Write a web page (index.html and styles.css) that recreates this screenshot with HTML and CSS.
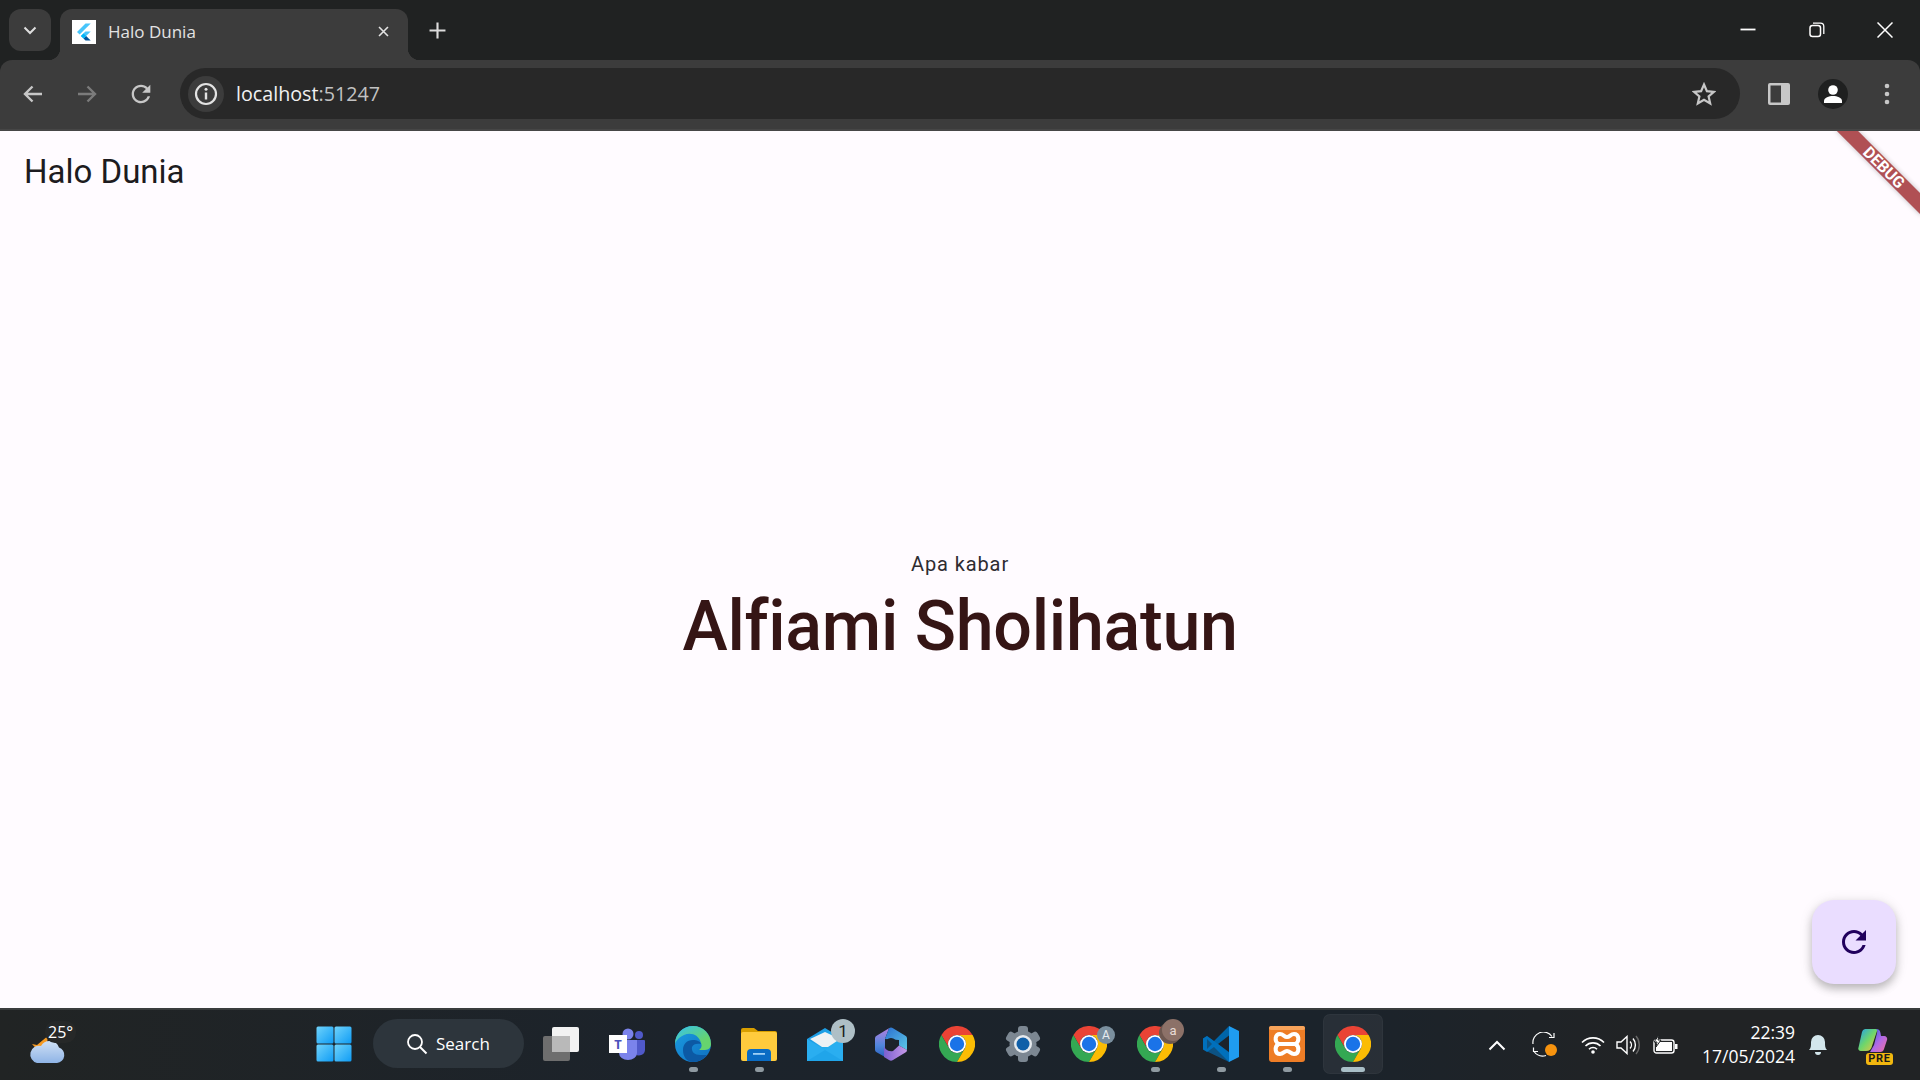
FILE: index.html
```html
<!DOCTYPE html>
<html lang="id">
<head>
<meta charset="utf-8">
<title>Halo Dunia</title>
<link rel="stylesheet" href="styles.css">
</head>
<body>
<svg class="defs" width="0" height="0" aria-hidden="true">
  <defs>
    <symbol id="chrome" viewBox="0 0 36 36">
      <path fill="#ea4335" d="M2.4 9A18 18 0 0 1 33.6 9H18A9 9 0 0 0 10.2 22.5Z"/>
      <path fill="#34a853" d="M2.4 9L10.2 22.5A9 9 0 0 0 25.8 22.5L18 36A18 18 0 0 1 2.4 9Z"/>
      <path fill="#fbbc04" d="M33.6 9H18A9 9 0 0 1 25.8 22.5L18 36A18 18 0 0 0 33.6 9Z"/>
      <circle cx="18" cy="18" r="9" fill="#fff"/>
      <circle cx="18" cy="18" r="7.2" fill="#1a73e8"/>
    </symbol>
    <linearGradient id="edgeA" x1="0" y1="0" x2="1" y2="1"><stop offset="0" stop-color="#1b9de2"/><stop offset="1" stop-color="#0f6fc0"/></linearGradient>
    <linearGradient id="edgeB" x1="0" y1="0" x2="1" y2="1"><stop offset="0" stop-color="#35c1f1"/><stop offset=".7" stop-color="#66d36e"/></linearGradient>
    <linearGradient id="startG" x1="0" y1="0" x2="1" y2="1"><stop offset="0" stop-color="#6fd3fb"/><stop offset="1" stop-color="#0f9cf5"/></linearGradient>
    <linearGradient id="cloudG" x1="0" y1="0" x2="0" y2="1"><stop offset="0" stop-color="#cfe0f5"/><stop offset="1" stop-color="#8fb4e6"/></linearGradient>
    <linearGradient id="mailG" x1="0" y1="0" x2="1" y2="1"><stop offset="0" stop-color="#1490df"/><stop offset="1" stop-color="#36c5f5"/></linearGradient>
    <linearGradient id="hexL" x1="0" y1="0" x2="0" y2="1"><stop offset="0" stop-color="#b27fe0"/><stop offset=".6" stop-color="#4f86dc"/><stop offset="1" stop-color="#2a62c0"/></linearGradient>
    <linearGradient id="hexT" x1="0" y1="0" x2="1" y2="1"><stop offset="0" stop-color="#2b6fd0"/><stop offset="1" stop-color="#5cc8e8"/></linearGradient>
    <linearGradient id="hexB" x1="0" y1="0" x2="1" y2="0"><stop offset="0" stop-color="#7a5fd0"/><stop offset="1" stop-color="#c79ae8"/></linearGradient>
    <linearGradient id="copG" x1="0" y1="0" x2="1" y2="1"><stop offset="0" stop-color="#1f9ff0"/><stop offset=".5" stop-color="#6fd66a"/><stop offset="1" stop-color="#f5c23f"/></linearGradient>
    <linearGradient id="copH" x1="0" y1="0" x2="1" y2="1"><stop offset="0" stop-color="#2b63e0"/><stop offset=".55" stop-color="#b36ae6"/><stop offset="1" stop-color="#f2709b"/></linearGradient>
  </defs>
</svg>

<header class="tabstrip">
  <button class="tab-search">
    <svg class="ic16" viewBox="0 0 16 16"><path d="M2.5 5.5L8 11l5.5-5.5" fill="none" stroke="#dedede" stroke-width="2"/></svg>
  </button>
  <div class="tab">
    <span class="favicon">
      <svg viewBox="0 0 24 24" width="24" height="24"><path fill="#47c5fb" d="M13.5 3.5L5 12l2.6 2.6L18.7 3.5Z"/><path fill="#47c5fb" d="M13.4 11.4L8.9 16l2.6 2.6 7.2-7.2Z"/><path fill="#00569e" d="M11.5 18.6l2 2h5.2l-4.6-4.6Z"/><path fill="#00b5f8" d="M8.9 16l2.6-2.6 2.6 2.6-2.6 2.6Z"/></svg>
    </span>
    <span class="tab-title">Halo Dunia</span>
    <svg class="tab-close" viewBox="0 0 16 16"><path d="M2.5 2.5l11 11M13.5 2.5l-11 11" stroke="#e3e3e3" stroke-width="2"/></svg>
  </div>
  <svg class="new-tab" viewBox="0 0 16 16"><path d="M8 0.5v15M0.5 8h15" stroke="#dcdcdc" stroke-width="2"/></svg>
  <div class="win-controls">
    <svg class="win-btn" viewBox="0 0 16 16"><path d="M0.5 7.5h15" stroke="#fff" stroke-width="1.8"/></svg>
    <svg class="win-btn" viewBox="0 0 16 16"><rect x="1" y="3.5" width="10.5" height="11" rx="2.5" fill="none" stroke="#fff" stroke-width="1.5"/><path d="M4 1.2h7.5A3.3 3.3 0 0 1 14.8 4.5v7.5" fill="none" stroke="#fff" stroke-width="1.3"/></svg>
    <svg class="win-btn" viewBox="0 0 16 16"><path d="M0.5 0.5l15 15M15.5 0.5l-15 15" stroke="#fff" stroke-width="1.5"/></svg>
  </div>
</header>

<nav class="toolbar">
  <svg class="tool" viewBox="0 0 24 24"><path d="M21 12H4M11.5 4.5L4 12l7.5 7.5" fill="none" stroke="#c7c7c7" stroke-width="2.4"/></svg>
  <svg class="tool tool-fwd" viewBox="0 0 24 24"><path d="M3 12h17M12.5 4.5L20 12l-7.5 7.5" fill="none" stroke="#7b7b7b" stroke-width="2.4"/></svg>
  <svg class="tool-reload" viewBox="0 0 24 24"><path fill="#c7c7c7" d="M17.65 6.35C16.2 4.9 14.21 4 12 4c-4.42 0-7.99 3.58-7.99 8s3.57 8 7.99 8c3.73 0 6.84-2.55 7.73-6h-2.08c-.82 2.33-3.04 4-5.65 4-3.31 0-6-2.69-6-6s2.69-6 6-6c1.66 0 3.14.69 4.22 1.78L13 11h7V4l-2.35 2.35z"/></svg>
  <div class="omnibox">
    <span class="site-info">
      <svg viewBox="0 0 24 24" width="24" height="24"><circle cx="12" cy="12" r="10" fill="none" stroke="#e3e3e3" stroke-width="2.2"/><path d="M12 10.5v7" stroke="#e3e3e3" stroke-width="2.4"/><circle cx="12" cy="7.3" r="1.5" fill="#e3e3e3"/></svg>
    </span>
    <span class="url">localhost<span class="url-port">:51247</span></span>
    <svg class="star" viewBox="0 0 24 24"><path d="M12 2.5l2.9 6.6 7.1.7-5.4 4.7 1.6 7-6.2-3.7-6.2 3.7 1.6-7L2 9.8l7.1-.7Z" fill="none" stroke="#c7c7c7" stroke-width="2.2"/></svg>
  </div>
  <svg class="panel-ic" viewBox="0 0 22 22"><rect width="22" height="22" rx="2" fill="#c7c7c7"/><rect x="2.5" y="2.5" width="10.5" height="17" fill="#3c3c3c"/></svg>
  <span class="avatar">
    <svg viewBox="0 0 30 30" width="30" height="30"><circle cx="15" cy="15" r="15" fill="#1f2020"/><circle cx="15" cy="11" r="4.8" fill="#fff"/><path d="M6 24v-2c0-3.5 5-5 9-5s9 1.5 9 5v2Z" fill="#fff"/></svg>
  </span>
  <svg class="menu-ic" viewBox="0 0 6 22"><circle cx="3" cy="3" r="2.3" fill="#c7c7c7"/><circle cx="3" cy="11" r="2.3" fill="#c7c7c7"/><circle cx="3" cy="19" r="2.3" fill="#c7c7c7"/></svg>
</nav>

<main class="page">
  <div class="appbar">Halo Dunia</div>
  <section class="hero">
    <p class="hero-small">Apa kabar</p>
    <h1 class="hero-name">Alfiami Sholihatun</h1>
  </section>
  <div class="debug-banner">DEBUG</div>
  <button class="fab">
    <svg viewBox="0 0 24 24" width="36" height="36"><path fill="#21005d" d="M17.65 6.35C16.2 4.9 14.21 4 12 4c-4.42 0-7.99 3.58-7.99 8s3.57 8 7.99 8c3.73 0 6.84-2.55 7.73-6h-2.08c-.82 2.33-3.04 4-5.65 4-3.31 0-6-2.69-6-6s2.69-6 6-6c1.66 0 3.14.69 4.22 1.78L13 11h7V4l-2.35 2.35z"/></svg>
  </button>
</main>

<footer class="taskbar">
  <div class="weather">
    <svg viewBox="0 0 38 38" width="38" height="38"><path d="M9 18l-5-1c3 4 6 5 9 5l6-7 2-7Z" fill="#f59a23"/><path d="M9 36h20a8 8 0 0 0 2-15.5A10 10 0 0 0 13 19a8.5 8.5 0 0 0-4 17Z" fill="url(#cloudG)"/></svg>
    <span class="temp">25°</span>
  </div>
  <div class="apps">
    <div class="app">
      <svg viewBox="0 0 36 36" width="36" height="36"><rect width="17" height="17" x="0.5" y="0.5" rx="1.5" fill="url(#startG)"/><rect width="17" height="17" x="18.5" y="0.5" rx="1.5" fill="url(#startG)"/><rect width="17" height="17" x="0.5" y="18.5" rx="1.5" fill="url(#startG)"/><rect width="17" height="17" x="18.5" y="18.5" rx="1.5" fill="url(#startG)"/></svg>
    </div>
    <div class="search">
      <svg viewBox="0 0 22 22" width="22" height="22"><circle cx="9" cy="9" r="7" fill="none" stroke="#fff" stroke-width="1.8"/><path d="M14 14l6.5 6.5" stroke="#fff" stroke-width="2"/></svg>
      <span>Search</span>
    </div>
    <div class="app">
      <svg viewBox="0 0 36 34" width="36" height="34"><rect x="0" y="9" width="27" height="25" rx="2" fill="#6e6e6e"/><rect x="9" y="0" width="27" height="25" rx="2" fill="#f2f2f2"/><path d="M9 9h18v16H9Z" fill="#b9b9b9"/></svg>
    </div>
    <div class="app">
      <svg viewBox="0 0 36 32" width="36" height="32"><circle cx="19" cy="6" r="5.5" fill="#7b83eb"/><circle cx="30" cy="7" r="4" fill="#5059c9"/><path d="M25 12h10a1 1 0 0 1 1 1v9a6 6 0 0 1-10 4Z" fill="#5059c9"/><path d="M10 12h18v13a9 7 0 0 1-18 0Z" fill="#7b83eb"/><rect x="0" y="7" width="18" height="18" fill="#fff"/><text class="teams-t" x="9" y="21" text-anchor="middle">T</text></svg>
    </div>
    <div class="app">
      <svg viewBox="0 0 36 36" width="36" height="36"><circle cx="18" cy="18" r="18" fill="url(#edgeA)"/><path d="M18 0C28 0 36 8 36 18c0 3-2 6-6 6h-6c3-2 3-5 2-7C24 9 16 6 9 9 2 12 1 16 0 18 0 8 8 0 18 0Z" fill="url(#edgeB)"/><path d="M32 29c-3 4-8 7-14 7-6 0-10-5-10-12 0-6 4-10 10-10 4 0 7 1 8 4-4-1-8 0-9 3-1 5 3 8 8 8 3 0 5 0 7 0Z" fill="#0c59a4"/></svg>
      <i class="dot"></i>
    </div>
    <div class="app">
      <svg viewBox="0 0 36 33" width="36" height="33"><path d="M0 2a2 2 0 0 1 2-2h11l4 3h17a2 2 0 0 1 2 2v5H0Z" fill="#d99f00"/><rect y="4" width="36" height="29" rx="2" fill="#ffcb3d"/><path d="M6 33V25a4 4 0 0 1 4-4h16a4 4 0 0 1 4 4v8Z" fill="#0a6cc4"/><rect x="12" y="25" width="12" height="1.8" fill="#9fd0f5"/></svg>
      <i class="dot"></i>
    </div>
    <div class="app">
      <svg viewBox="0 0 36 34" width="36" height="34"><path d="M0 12L18 1l18 11v22H0Z" fill="url(#mailG)"/><path d="M3 12L18 5l15 7-12 8h-6Z" fill="#eef2f4"/><path d="M0 12l18 11 18-11v22H0Z" fill="#2aaef0"/><path d="M36 34H0l18-11 18 11Z" fill="#1b9fe6" opacity=".6"/></svg>
      <span class="badge badge-mail">1</span>
    </div>
    <div class="app">
      <svg viewBox="0 0 32 34" width="32" height="34"><path d="M14 1.2L2 8.5A3 3 0 0 0 0 11v12a3 3 0 0 0 2 2.6l8 4.5V12Z" fill="url(#hexL)"/><path d="M14 1.2a4 4 0 0 1 4 0l12 7.3A3 3 0 0 1 32 11v12l-8-4.5V13L10 12Z" fill="url(#hexT)"/><path d="M9 17c0 5 4 8 9 7l6-5.5 8 4.5a3 3 0 0 1-2 2.8l-12 7.3a4 4 0 0 1-4 0l-5-3.1Z" fill="url(#hexB)"/><circle cx="16" cy="17" r="6" fill="#1c232b"/></svg>
    </div>
    <div class="app"><svg width="36" height="36"><use href="#chrome"/></svg></div>
    <div class="app">
      <svg viewBox="0 0 36 36" width="36" height="36"><g fill="#7c8792"><circle cx="18" cy="18" r="13.5"/><rect x="13" y="0" width="10" height="36" rx="3"/><rect x="13" y="0" width="10" height="36" rx="3" transform="rotate(60 18 18)"/><rect x="13" y="0" width="10" height="36" rx="3" transform="rotate(120 18 18)"/></g><circle cx="18" cy="18" r="9" fill="#e6eaee"/><circle cx="18" cy="18" r="6.5" fill="#0f5fa8"/></svg>
    </div>
    <div class="app">
      <svg width="36" height="36"><use href="#chrome"/></svg>
      <span class="badge badge-a">A</span>
    </div>
    <div class="app">
      <svg width="36" height="36"><use href="#chrome"/></svg>
      <span class="badge badge-b">a</span>
      <i class="dot"></i>
    </div>
    <div class="app">
      <svg viewBox="0 0 36 36" width="36" height="36"><path d="M26 0L11 15 4 10 0 12.5v11L4 26l7-5 15 15Z" fill="#0065a9"/><path d="M26 9.5L15 18l11 8.5Z" fill="#1c232b"/><path d="M4 13l5 5-5 5Z" fill="#1c232b"/><path d="M26 0l10 5v26l-10 5Z" fill="#1f9cf0"/><path d="M0 12.5L4 10l22 16v10L0 23.5Z" fill="#007acc" opacity=".55"/></svg>
      <i class="dot"></i>
    </div>
    <div class="app">
      <svg viewBox="0 0 36 36" width="36" height="36"><rect width="36" height="36" rx="3" fill="#ee7d26"/><rect width="36" height="4" rx="2" fill="#f7a35a"/><path d="M11 8c3.5 0 4 3 7 3s3.5-3 7-3c5 0 6 7 1.5 10C31 21 30 28 25 28c-3.5 0-4-3-7-3s-3.5 3-7 3c-5 0-6-7-1.5-10C5 15 6 8 11 8Z" fill="none" stroke="#fff" stroke-width="4"/><path d="M10 18h16" stroke="#fff" stroke-width="4"/></svg>
      <i class="dot"></i>
    </div>
    <div class="app app-active">
      <svg width="36" height="36"><use href="#chrome"/></svg>
      <i class="dot dot-active"></i>
    </div>
  </div>
  <div class="tray">
    <svg class="tr-chev" viewBox="0 0 18 11"><path d="M1.5 9.5L9 2l7.5 7.5" fill="none" stroke="#fff" stroke-width="2"/></svg>
    <svg class="tr-sync" viewBox="0 0 26 26"><path d="M1 12A10.5 10.5 0 0 1 20 4.5M22 1v4.5h-5M1 19.5h5M1.5 15.5v4.5M2 19.5a11 11 0 0 0 12 4" fill="none" stroke="#fff" stroke-width="1.2"/><circle cx="19" cy="18" r="6" fill="#f7930e"/></svg>
    <svg class="tr-wifi" viewBox="0 0 24 18"><path d="M1 6.5a15.5 15.5 0 0 1 22 0M4.5 10a10.5 10.5 0 0 1 15 0M8 13.3a5.5 5.5 0 0 1 8 0" fill="none" stroke="#fff" stroke-width="1.6"/><circle cx="12" cy="16" r="1.8" fill="#fff"/></svg>
    <svg class="tr-vol" viewBox="0 0 24 20"><path d="M1 7h4l6-5.5v17L5 13H1Z" fill="none" stroke="#fff" stroke-width="1.4"/><path d="M14 6.5a5 5 0 0 1 0 7M17 3.5a10 10 0 0 1 0 13" fill="none" stroke="#fff" stroke-width="1.4"/><path d="M20 1a14 14 0 0 1 0 18" fill="none" stroke="#666" stroke-width="1.4"/></svg>
    <svg class="tr-bat" viewBox="0 0 25 20"><rect x="1" y="5" width="20" height="13" rx="2.5" fill="none" stroke="#fff" stroke-width="1.4"/><rect x="3" y="7" width="16" height="9" fill="#fff"/><rect x="22" y="9" width="2.5" height="5" fill="#fff"/><path d="M6 0L1 7h3l-1 5 5-7H5Z" fill="#fff" stroke="#1f2224"/></svg>
    <div class="clock"><span>22:39</span><span>17/05/2024</span></div>
    <svg class="tr-bell" viewBox="0 0 20 22"><path d="M1 16c2-2 2-4 2-8a7 7 0 0 1 14 0c0 4 0 6 2 8Z" fill="#d3e6ec"/><path d="M7 18h6a3 3 0 0 1-6 0Z" fill="#d3e6ec"/></svg>
    <div class="copilot">
      <svg viewBox="0 0 30 26" width="30" height="26"><path d="M7 1h11c1 0 1.5.5 1 2l-5 15a6 6 0 0 1-6 5H3a2.5 2.5 0 0 1-2.500-3.500L4 4a4 4 0 0 1 3-3Z" fill="url(#copG)"/><path d="M18 1c3 0 4 1.500 4.500 4l.5 3h3a3 3 0 0 1 3 4l-3 9a4 4 0 0 1-4 3H12l4-7 3-12c.5-2 0-3-1-4Z" fill="url(#copH)"/></svg>
      <span class="pre">PRE</span>
    </div>
  </div>
</footer>
</body>
</html>
```

FILE: styles.css
```css
* { box-sizing: border-box; }
html, body { margin: 0; height: 100%; }
body {
  display: flex;
  flex-direction: column;
  height: 1080px;
  overflow: hidden;
  font-family: "Roboto", "Liberation Sans", sans-serif;
  background: #202222;
}
.defs { position: absolute; }
button { border: 0; padding: 0; font: inherit; }

/* Tab strip */
.tabstrip {
  height: 60px;
  flex: none;
  display: flex;
  align-items: flex-start;
  padding: 9px 0 0 9px;
  background: #202222;
}
.tab-search {
  width: 42px;
  height: 42px;
  border-radius: 12px;
  background: #3c3c3c;
  display: flex;
  align-items: center;
  justify-content: center;
}
.ic16 { width: 16px; height: 16px; }
.tab {
  position: relative;
  width: 348px;
  height: 51px;
  margin-left: 9px;
  padding: 0 18px 6px 12px;
  border-radius: 12px 12px 0 0;
  background: #3c3c3c;
  display: flex;
  align-items: center;
}
.tab::before, .tab::after {
  content: "";
  position: absolute;
  bottom: 0;
  width: 12px;
  height: 12px;
}
.tab::before { left: -12px; background: radial-gradient(circle at 0 0, transparent 12px, #3c3c3c 12.5px); }
.tab::after { right: -12px; background: radial-gradient(circle at 100% 0, transparent 12px, #3c3c3c 12.5px); }
.favicon { width: 24px; height: 24px; background: #fff; display: block; flex: none; }
.favicon svg { display: block; }
.tab-title {
  margin: 0 0 1px 12px;
  flex: 1;
  color: #e3e3e3;
  font: 400 17px "Open Sans", sans-serif;
}
.tab-close { width: 13px; height: 13px; }
.new-tab { width: 17px; height: 17px; margin: 13px 0 0 21px; }
.win-controls {
  margin-left: auto;
  height: 51px;
  display: flex;
  align-items: flex-start;
  padding: 13px 27px 0 0;
  gap: 52.5px;
}
.win-btn { width: 16px; height: 16px; }

/* Toolbar */
.toolbar {
  height: 71px;
  flex: none;
  display: flex;
  align-items: center;
  padding: 0 0 2px 21px;
  background: #3c3c3c;
  border-radius: 12px 12px 0 0;
  border-bottom: 2px solid #464646;
}
.tool { width: 24px; height: 24px; margin-right: 30px; flex: none; }
.tool-fwd { margin-right: 28px; }
.tool-reload { width: 28px; height: 28px; margin-right: 25px; flex: none; }
.omnibox {
  width: 1560px;
  height: 51px;
  flex: none;
  display: flex;
  align-items: center;
  padding: 0 24px 0 8px;
  background: #282828;
  border-radius: 26px;
}
.site-info {
  width: 36px;
  height: 36px;
  border-radius: 50%;
  background: #3c3c3c;
  display: flex;
  align-items: center;
  justify-content: center;
}
.url { margin-left: 12px; color: #f1f1f1; font: 400 19.7px "Open Sans", sans-serif; }
.url-port { color: #c2c2c2; }
.star { width: 24px; height: 24px; margin-left: auto; }
.panel-ic { width: 22px; height: 22px; margin-left: 28px; flex: none; }
.avatar { width: 30px; height: 30px; margin-left: 28px; flex: none; }
.avatar svg { display: block; }
.menu-ic { width: 6px; height: 22px; margin-left: 36px; flex: none; }

/* Flutter page */
.page {
  position: relative;
  flex: 1;
  min-height: 0;
  overflow: hidden;
  display: flex;
  flex-direction: column;
  background: #fffbff;
}
.appbar {
  height: 70px;
  flex: none;
  padding: 21px 0 0 24px;
  color: #1d1b20;
  font-size: 33px;
  line-height: 40px;
}
.hero {
  flex: 1;
  padding-top: 11px;
  display: flex;
  flex-direction: column;
  align-items: center;
  justify-content: center;
}
.hero-small {
  margin: 0;
  color: #2e2c31;
  font-size: 20px;
  line-height: 30px;
  letter-spacing: .9px;
}
.hero-name {
  margin: 0;
  color: #351515;
  font-size: 71.25px;
  font-weight: 500;
  line-height: 93px;
  letter-spacing: -.3px;
  transform: scaleX(.957);
}
.debug-banner {
  position: absolute;
  top: 29px;
  right: -24px;
  width: 120px;
  height: 15px;
  transform: rotate(45deg);
  background: #b05054;
  color: #fff;
  font-size: 16px;
  font-weight: 700;
  line-height: 15px;
  text-align: center;
  box-shadow: 0 0 5px rgba(0, 0, 0, .25);
}
.fab {
  position: absolute;
  right: 24px;
  bottom: 24px;
  width: 84px;
  height: 84px;
  border-radius: 22px;
  background: #eaddff;
  display: flex;
  align-items: center;
  justify-content: center;
  box-shadow: 0 5px 8px rgba(0, 0, 0, .22), 0 2px 14px rgba(0, 0, 0, .1);
}
.fab svg { display: block; }

/* Taskbar */
.taskbar {
  height: 72px;
  flex: none;
  display: flex;
  align-items: center;
  border-top: 2px solid #3a3c3e;
  background: linear-gradient(90deg, #212424 0%, #1c232b 35%, #1b232b 70%, #212325 85%);
}
.weather {
  position: relative;
  width: 72px;
  margin-left: 28px;
  margin-right: 201px;
  padding-top: 2px;
  display: flex;
}
.temp {
  position: absolute;
  left: 17px;
  top: -4px;
  padding: 0 3px;
  border-radius: 10px;
  background: #262828;
  color: #fff;
  font: 400 16px "Open Sans", sans-serif;
  line-height: 22px;
}
.apps { display: flex; align-items: center; height: 100%; }
.app {
  position: relative;
  width: 66px;
  height: 70px;
  padding-bottom: 2px;
  flex: none;
  display: flex;
  align-items: center;
  justify-content: center;
}
.app-active::before {
  content: "";
  position: absolute;
  left: 3px;
  right: 3px;
  top: 4px;
  bottom: 6px;
  border-radius: 7px;
  background: rgba(255, 255, 255, .06);
  box-shadow: inset 0 0 0 1px rgba(255, 255, 255, .03);
}
.app svg { position: relative; display: block; }
.dot {
  position: absolute;
  left: 50%;
  bottom: 8px;
  width: 9px;
  height: 5px;
  margin-left: -4.5px;
  border-radius: 3px;
  background: #8f9aa1;
}
.dot-active { width: 24px; margin-left: -12px; background: #a9bfc7; }
.search {
  width: 151px;
  height: 49px;
  margin: -3px 4px 0 6px;
  padding-left: 33px;
  border-radius: 25px;
  background: #2d353c;
  display: flex;
  align-items: center;
  gap: 8px;
  color: #fff;
  font: 400 17px "Open Sans", sans-serif;
}
.badge {
  position: absolute;
  border-radius: 50%;
  display: flex;
  align-items: center;
  justify-content: center;
}
.badge-mail {
  right: 3px;
  top: 9px;
  width: 24px;
  height: 24px;
  background: #aebfc6;
  color: #1b1f22;
  font-size: 17px;
}
.badge-a {
  right: 7px;
  top: 16px;
  width: 18px;
  height: 18px;
  background: #7a8f9e;
  color: #e8edf0;
  font-size: 12px;
}
.badge-b {
  right: 4px;
  top: 9px;
  width: 22px;
  height: 22px;
  background: #8c7168;
  color: #e8dcd6;
  font-size: 13px;
  box-shadow: -3px 3px 0 0 #6d574f;
}
.tray {
  margin-left: auto;
  padding-right: 26px;
  display: flex;
  align-items: center;
  height: 100%;
  flex: none;
}
.tr-chev { width: 18px; height: 11px; margin-right: 26px; }
.tr-sync { width: 26px; height: 26px; margin-right: 23px; }
.tr-wifi { width: 24px; height: 18px; margin-right: 11px; }
.tr-vol { width: 24px; height: 20px; margin-right: 12.5px; }
.tr-bat { width: 25px; height: 20px; }
.clock {
  width: 110px;
  margin: 0 0 3px 7.5px;
  display: flex;
  flex-direction: column;
  align-items: flex-end;
  color: #fff;
  font: 400 17.5px "Open Sans", sans-serif;
  line-height: 24px;
}
.tr-bell { width: 20px; height: 22px; margin-left: 13px; }
.copilot { position: relative; width: 36px; height: 34px; margin-left: 30px; }
.copilot svg { display: block; }
.pre {
  position: absolute;
  left: 8px;
  bottom: -3px;
  width: 27px;
  height: 12px;
  border-radius: 3px;
  background: #f2b70f;
  color: #1a1a1a;
  font-size: 11px;
  font-weight: 700;
  line-height: 12px;
  letter-spacing: .8px;
  text-align: center;
}
.teams-t { fill: #4b53bc; font: 700 13px "Open Sans", sans-serif; }
```
